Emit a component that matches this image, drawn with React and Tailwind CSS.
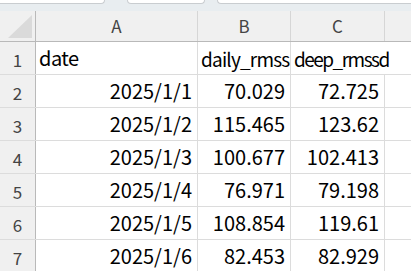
export default function App() {
  const rows = [
    ["2025/1/1", "70.029", "72.725"],
    ["2025/1/2", "115.465", "123.62"],
    ["2025/1/3", "100.677", "102.413"],
    ["2025/1/4", "76.971", "79.198"],
    ["2025/1/5", "108.854", "119.61"],
    ["2025/1/6", "82.453", "82.929"],
  ];
  const font = { fontFamily: '"Noto Sans CJK JP", "Noto Sans", sans-serif' };
  return (
    <div className="w-[411px] h-[271px] overflow-hidden bg-white" style={font}>
      {/* top band */}
      <div className="h-[11px] bg-[#e8edf0] flex items-start">
        <div className="w-[105px] h-[4px] bg-white border-b border-r border-[#c9cdd0] rounded-br-[4px]" />
        <div className="ml-[22px] w-[78px] h-[4px] bg-white border border-t-0 border-[#c9cdd0] rounded-b-[4px]" />
        <div className="ml-[12px] flex-1 h-[4px] bg-white border-b border-l border-[#c9cdd0] rounded-bl-[4px]" />
      </div>
      {/* header row */}
      <div className="flex h-[31px] bg-[#f0f0f0] border-b border-[#b9b9b9] text-[17px] text-[#444]">
        <div className="w-[36px] shrink-0 border-r border-[#b9b9b9] flex items-end justify-end pr-[3px] pb-[3px]">
          <div
            className="w-[24px] h-[23px] bg-[#dadada]"
            style={{ clipPath: "polygon(100% 0, 100% 100%, 0 100%)" }}
          />
        </div>
        <div className="w-[162px] shrink-0 border-r border-[#d6d6d6] flex items-center justify-center">A</div>
        <div className="w-[93px] shrink-0 border-r border-[#d6d6d6] flex items-center justify-center">B</div>
        <div className="w-[94px] shrink-0 border-r border-[#d6d6d6] flex items-center justify-center">C</div>
        <div className="flex-1" />
      </div>
      {/* row 1 */}
      <div className="flex h-[33px] border-b border-[#dcdcdc]">
        <div className="w-[36px] shrink-0 bg-[#f0f0f0] border-r border-[#b9b9b9] flex items-center justify-center text-[17px] text-[#444] pt-[4px]">1</div>
        <div className="w-[162px] shrink-0 border-r border-[#dcdcdc] flex items-end pl-[3px] text-[20px] leading-none text-black tracking-[-0.5px]">
          <span className="pb-[6px]">date</span>
        </div>
        <div className="w-[93px] shrink-0 border-r border-[#dcdcdc] overflow-hidden whitespace-nowrap flex items-end pl-[3px] text-[19px] leading-none text-black tracking-[-0.8px]">
          <span className="pb-[6px]">daily_rmssd</span>
        </div>
        <div className="w-[94px] shrink-0 flex items-end pl-[3px] text-[19px] leading-none text-black whitespace-nowrap tracking-[-1.5px]">
          <span className="pb-[6px]">deep_rmssd</span>
        </div>
        <div className="flex-1" />
      </div>
      {rows.map((r, i) => (
        <div key={i} className="flex h-[33px] border-b border-[#dcdcdc]">
          <div className="w-[36px] shrink-0 bg-[#f0f0f0] border-r border-[#b9b9b9] flex items-center justify-center text-[17px] text-[#444] pt-[4px]">
            {i + 2}
          </div>
          <div className="w-[162px] shrink-0 border-r border-[#dcdcdc] flex items-end justify-end pr-[5px] text-[20px] leading-none text-black">
            <span className="pb-[6px]">{r[0]}</span>
          </div>
          <div className="w-[93px] shrink-0 border-r border-[#dcdcdc] flex items-end justify-end pr-[5px] text-[20px] leading-none text-black">
            <span className="pb-[6px]">{r[1]}</span>
          </div>
          <div className="w-[94px] shrink-0 border-r border-[#dcdcdc] flex items-end justify-end pr-[5px] text-[20px] leading-none text-black">
            <span className="pb-[6px]">{r[2]}</span>
          </div>
          <div className="flex-1" />
        </div>
      ))}
    </div>
  );
}
